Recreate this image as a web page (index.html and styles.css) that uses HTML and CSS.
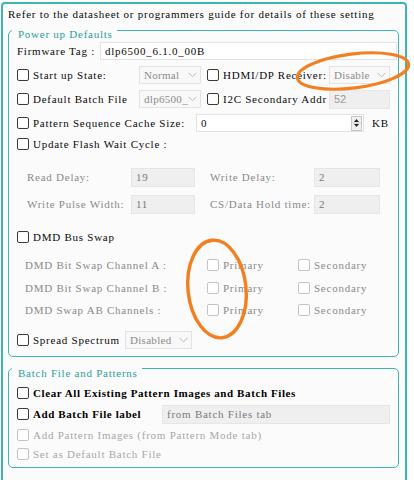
FILE: index.html
```html
<!DOCTYPE html>
<html>
<head>
<meta charset="utf-8">
<link rel="stylesheet" href="styles.css">
</head>
<body>
<div class="frame">
  <div class="header">Refer to the datasheet or programmers guide for details of these setting</div>

  <div class="group g1">
    <div class="gtitle">Power up Defaults</div>

    <div class="row r-fw">
      <span class="lbl w83">Firmware Tag :</span>
      <div class="tb w297">dlp6500_6.1.0_00B</div>
    </div>

    <div class="row r-start">
      <div class="chk-l w122"><span class="cb"></span><span class="lbl">Start up State:</span></div>
      <div class="combo w62"><span>Normal</span><svg class="chev" width="9" height="6" viewBox="0 0 9 6"><polyline points="0.5,0.8 4.5,4.8 8.5,0.8" fill="none" stroke="#b8b8b8" stroke-width="1"/></svg></div>
      <div class="chk-l w122 ml6"><span class="cb"></span><span class="lbl">HDMI/DP Receiver:</span></div>
      <div class="combo w61"><span>Disable</span><svg class="chev" width="9" height="6" viewBox="0 0 9 6"><polyline points="0.5,0.8 4.5,4.8 8.5,0.8" fill="none" stroke="#b8b8b8" stroke-width="1"/></svg></div>
    </div>

    <div class="row r-std">
      <div class="chk-l w122"><span class="cb"></span><span class="lbl">Default Batch File</span></div>
      <div class="combo w62"><span>dlp6500_</span><svg class="chev" width="9" height="6" viewBox="0 0 9 6"><polyline points="0.5,0.8 4.5,4.8 8.5,0.8" fill="none" stroke="#b8b8b8" stroke-width="1"/></svg></div>
      <div class="chk-l w122 ml6"><span class="cb"></span><span class="lbl">I2C Secondary Addr</span></div>
      <div class="tb grey w61 sans">52</div>
    </div>

    <div class="row r-std">
      <div class="chk-l w179"><span class="cb"></span><span class="lbl">Pattern Sequence Cache Size:</span></div>
      <div class="tb spinbox w168"><span>0</span>
        <div class="spin"><svg width="9" height="14" viewBox="0 0 9 14"><polygon points="4.5,3 7,6 2,6" fill="#222"/><polygon points="4.5,11 7,8 2,8" fill="#222"/><line x1="0" y1="7" x2="9" y2="7" stroke="#d0d0d0"/></svg></div>
      </div>
      <span class="lbl kb">KB</span>
    </div>

    <div class="row r-upd">
      <span class="cb"></span><span class="lbl">Update Flash Wait Cycle :</span>
    </div>

    <div class="row r-read">
      <span class="lbl dis w104">Read Delay:</span>
      <div class="tb grey w64">19</div>
      <span class="lbl dis w104 ml15">Write Delay:</span>
      <div class="tb grey w66">2</div>
    </div>

    <div class="row r-pulse">
      <span class="lbl dis w104">Write Pulse Width:</span>
      <div class="tb grey w64">11</div>
      <span class="lbl dis w104 ml15">CS/Data Hold time:</span>
      <div class="tb grey w66">2</div>
    </div>

    <div class="row r-dmd">
      <span class="cb"></span><span class="lbl">DMD Bus Swap</span>
    </div>

    <div class="row r-a">
      <span class="lbl dis w182">DMD Bit Swap Channel A :</span>
      <div class="chk-l w91"><span class="cb off"></span><span class="lbl dis">Primary</span></div>
      <div class="chk-l"><span class="cb off"></span><span class="lbl dis">Secondary</span></div>
    </div>
    <div class="row r-b">
      <span class="lbl dis w182">DMD Bit Swap Channel B :</span>
      <div class="chk-l w91"><span class="cb off"></span><span class="lbl dis">Primary</span></div>
      <div class="chk-l"><span class="cb off"></span><span class="lbl dis">Secondary</span></div>
    </div>
    <div class="row r-ab">
      <span class="lbl dis w182">DMD Swap AB Channels :</span>
      <div class="chk-l w91"><span class="cb off"></span><span class="lbl dis">Primary</span></div>
      <div class="chk-l"><span class="cb off"></span><span class="lbl dis">Secondary</span></div>
    </div>

    <div class="row r-spread">
      <div class="chk-l w108"><span class="cb"></span><span class="lbl">Spread Spectrum</span></div>
      <div class="combo w67"><span>Disabled</span><svg class="chev" width="9" height="6" viewBox="0 0 9 6"><polyline points="0.5,0.8 4.5,4.8 8.5,0.8" fill="none" stroke="#b8b8b8" stroke-width="1"/></svg></div>
    </div>
  </div>

  <div class="group g2">
    <div class="gtitle">Batch File and Patterns</div>
    <div class="row r-clear">
      <span class="cb"></span><span class="lbl bold">Clear All Existing Pattern Images and Batch Files</span>
    </div>
    <div class="row r-add">
      <div class="chk-l w145"><span class="cb"></span><span class="lbl bold">Add Batch File label</span></div>
      <div class="tb grey w228">from Batch Files tab</div>
    </div>
    <div class="row r-img">
      <span class="cb off"></span><span class="lbl faint">Add Pattern Images (from Pattern Mode tab)</span>
    </div>
    <div class="row r-set">
      <span class="cb off"></span><span class="lbl faint">Set as Default Batch File</span>
    </div>
  </div>
</div>

<svg class="marks" width="414" height="480" viewBox="0 0 414 480">
  <ellipse cx="353" cy="71" rx="56" ry="17" transform="rotate(-7 353 71)" fill="none" stroke="#f47f20" stroke-width="3.2"/>
  <ellipse cx="217" cy="289" rx="29" ry="49" transform="rotate(-6 217 289)" fill="none" stroke="#f47f20" stroke-width="3.4"/>
</svg>
</body>
</html>
```

FILE: styles.css
```css
* { box-sizing: border-box; }
html, body {
  margin: 0;
  padding: 0;
  background: #ffffff;
  overflow: hidden;
}
body {
  width: 414px;
  height: 480px;
  position: relative;
  font-family: "Liberation Serif", "Times New Roman", serif;
  font-size: 11px;
  letter-spacing: 0.75px;
  color: #0a0a0a;
}
.frame {
  margin: 2px 0 0 1px;
  width: 406px;
  height: 500px;
  border: 2px solid #3db6b3;
  border-radius: 4px;
  background: #fbfbfb;
}
.header {
  padding: 2px 0 0 5px;
  line-height: 16px;
  white-space: nowrap;
}
.group {
  margin-left: 5px;
  width: 391px;
  border: 1px solid #3db6b3;
  border-radius: 5px;
  display: flex;
  flex-direction: column;
}
.g1 { margin-top: 8px; padding-bottom: 6px; }
.g2 { margin-top: 11px; padding-bottom: 4px; }
.gtitle {
  align-self: flex-start;
  margin: -4px 0 0 3px;
  padding: 0 4px 0 6px;
  line-height: 14px;
  height: 14px;
  background: #fbfbfb;
  color: #2a9e9c;
}
.g2 .gtitle { margin-top: -3px; }
.row {
  display: flex;
  align-items: center;
  height: 20px;
  padding-left: 8px;
  white-space: nowrap;
}
.r-start { margin-top: 4px; }
.r-std { margin-top: 4px; }
.r-upd { margin-top: 1px; }
.r-read { margin-top: 13px; padding-left: 18px; }
.r-pulse { margin-top: 7px; padding-left: 18px; }
.r-dmd { margin-top: 13px; }
.r-a { margin-top: 8px; padding-left: 16px; }
.r-b { margin-top: 3px; padding-left: 16px; }
.r-ab { margin-top: 2px; padding-left: 16px; }
.r-spread { margin-top: 10px; }
.r-clear { margin-top: 3px; }
.r-add { margin-top: 1px; }
.r-img { margin-top: 2px; height: 18px; }
.r-set { margin-top: 1px; height: 18px; }

.chk-l { display: flex; align-items: center; flex: none; }
.cb {
  flex: none;
  width: 12px;
  height: 12px;
  border: 1px solid #3a3a3a;
  border-radius: 2px;
  background: #ffffff;
  margin-right: 4px;
}
.cb.off { border-color: #c4c4c4; }
.lbl { flex: none; }
.dis { color: #8a8a8a; }
.faint { color: #a8a8a8; }
.bold { font-weight: bold; color: #000; letter-spacing: 0.6px; }
.kb { margin-left: 8px; }

.tb {
  flex: none;
  height: 18px;
  border: 1px solid #e2e2e2;
  background: #ffffff;
  display: flex;
  align-items: center;
  padding-left: 4px;
  color: #0a0a0a;
}
.tb.grey { background: #efefef; border-color: #e6e6e6; color: #7a7a7a; height: 19px; }
.sans { font-family: "Liberation Sans", Arial, sans-serif; letter-spacing: 0; color: #9a9a9a !important; }
.spinbox { justify-content: space-between; padding-right: 1px; }
.spin {
  width: 11px;
  height: 15px;
  border: 1px solid #c8c8c8;
  background: #f0f0f0;
  display: flex;
  align-items: center;
  justify-content: center;
}
.combo {
  flex: none;
  height: 18px;
  border: 1px solid #e4e4e4;
  background: #f8f8f8;
  display: flex;
  align-items: center;
  justify-content: space-between;
  padding: 0 3px 0 4px;
  color: #8c8c8c;
  letter-spacing: 0.3px;
}
.chev { flex: none; }

.w61 { width: 61px; }
.w62 { width: 62px; }
.w64 { width: 64px; }
.w66 { width: 66px; }
.w67 { width: 67px; }
.w83 { width: 83px; }
.w91 { width: 91px; }
.w104 { width: 104px; }
.w108 { width: 108px; }
.w122 { width: 122px; }
.w145 { width: 145px; }
.w168 { width: 168px; }
.w179 { width: 179px; }
.w182 { width: 182px; }
.w228 { width: 228px; }
.w297 { width: 297px; }
.ml6 { margin-left: 6px; }
.ml15 { margin-left: 15px; }

.marks {
  position: absolute;
  left: 0;
  top: 0;
  pointer-events: none;
}
```
